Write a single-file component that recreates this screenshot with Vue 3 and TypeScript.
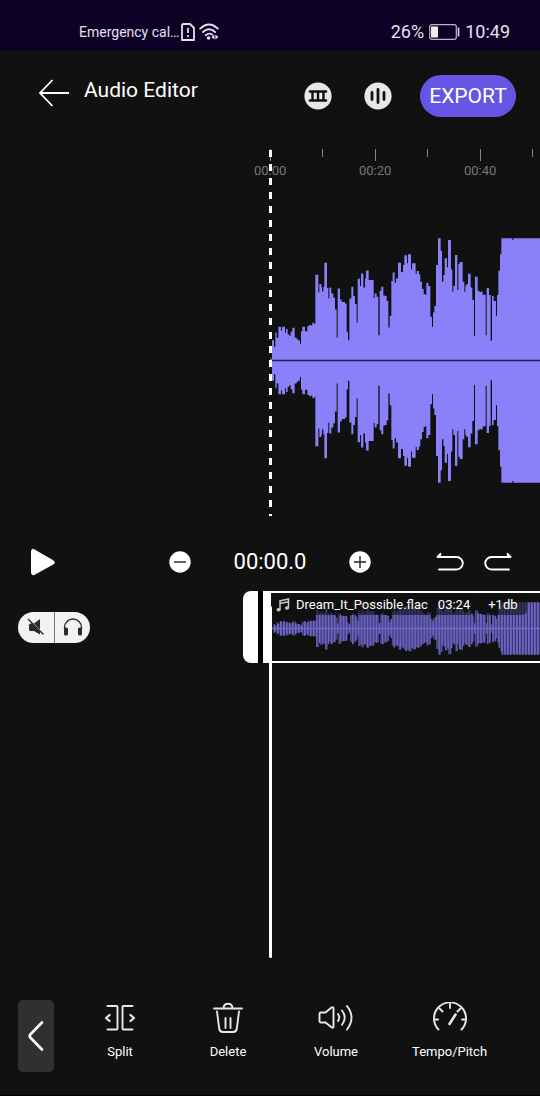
<script setup lang="ts">
import { computed, ref } from 'vue'

interface Tool {
  id: 'split' | 'delete' | 'volume' | 'tempo'
  label: string
}

const tools: Tool[] = [
  { id: 'split', label: 'Split' },
  { id: 'delete', label: 'Delete' },
  { id: 'volume', label: 'Volume' },
  { id: 'tempo', label: 'Tempo/Pitch' },
]

const marks: string[] = ['00:00', '00:20', '00:40']

const playing = ref(false)
const timecode = ref('00:00.0')

// Peak envelope as [start, level] steps; 810 units wide, levels up to 366.
const peaks: [number, number][] = [
  [0, 6], [6, 61], [12, 41], [16, 83], [20, 68], [25, 101], [33, 89], [36, 101], [45, 83], [48, 94],
  [53, 79], [58, 74], [62, 86], [67, 98], [74, 69], [80, 64], [85, 60], [90, 49], [93, 88], [97, 101],
  [105, 88], [112, 103], [118, 107], [123, 105], [127, 113], [133, 109], [136, 257], [145, 204],
  [148, 229], [154, 221], [156, 207], [160, 221], [163, 293], [171, 217], [175, 186], [178, 219],
  [184, 201], [190, 188], [195, 153], [200, 69], [203, 216], [210, 183], [215, 175], [225, 171],
  [230, 86], [234, 61], [238, 186], [244, 221], [250, 193], [255, 169], [260, 113], [263, 245],
  [270, 223], [273, 261], [280, 219], [285, 246], [288, 270], [296, 241], [311, 187], [314, 201],
  [320, 191], [325, 76], [329, 209], [334, 221], [340, 195], [345, 193], [350, 179], [355, 99],
  [359, 134], [364, 238], [368, 264], [374, 233], [378, 246], [384, 293], [390, 293], [393, 265],
  [399, 286], [403, 315], [411, 291], [414, 318], [423, 273], [426, 291], [437, 259], [440, 268],
  [447, 258], [451, 236], [456, 214], [461, 199], [466, 196], [469, 233], [475, 223], [481, 131],
  [486, 101], [489, 144], [493, 163], [498, 286], [504, 366], [512, 329], [516, 236], [520, 256],
  [524, 306], [531, 279], [534, 361], [543, 273], [547, 206], [550, 223], [555, 316], [562, 211],
  [565, 288], [569, 295], [578, 236], [583, 206], [586, 223], [589, 229], [594, 260], [602, 219],
  [607, 181], [612, 73], [615, 251], [623, 209], [628, 205], [633, 207], [638, 197], [647, 76],
  [650, 217], [657, 196], [662, 59], [666, 193], [671, 178], [678, 134], [681, 196], [685, 269],
  [690, 318], [694, 366], [727, 361], [730, 366], [810, 366],
]

const wavePath = computed(() => {
  const top: string[] = []
  const bottom: string[] = []
  peaks.forEach(([x, level], i) => {
    const next = i + 1 < peaks.length ? peaks[i + 1][0] : x
    top.push(`L${x} ${370 - level}L${next} ${370 - level}`)
    bottom.unshift(`L${next} ${370 + level}L${x} ${370 + level}`)
  })
  return `M0 370${top.join('')}${bottom.join('')}Z`
})
</script>

<template>
  <main class="page">
    <div class="status">
      <span class="carrier">Emergency cal…</span>
      <svg class="sim" viewBox="0 0 14 18" width="14" height="18" aria-hidden="true">
        <path d="M2 1h7l4 4v12H1V2z" fill="none" stroke="#e4e0ee" stroke-width="1.8" stroke-linejoin="round" />
        <path d="M7 5v5M7 12v2" stroke="#e4e0ee" stroke-width="1.8" />
      </svg>
      <svg class="wifi" viewBox="0 0 20 18" width="20" height="18" aria-hidden="true">
        <g fill="none" stroke="#e4e0ee" stroke-width="1.9" stroke-linecap="round">
          <path d="M1.2 5.6Q10-2.6 18.8 5.6" />
          <path d="M4 9Q10 3.4 16 9" />
          <path d="M6.8 12.2Q10 9.4 13 11.6" />
        </g>
        <circle cx="9.6" cy="15" r="1.8" fill="#e4e0ee" />
        <path d="M15.4 11.5v5L12.4 14zM16.4 11.5v5l3-2.5z" fill="#e4e0ee" />
      </svg>
      <span class="battery-text">26%</span>
      <svg viewBox="0 0 31 16" width="31" height="16" aria-hidden="true">
        <rect x="0.7" y="0.7" width="26.6" height="14.6" rx="2" fill="none" stroke="#b9b4c8" stroke-width="1.2" />
        <rect x="2" y="2.5" width="7" height="11" fill="#eeebf5" />
        <rect x="28.6" y="3.5" width="1.8" height="9" fill="#c9c5d6" />
      </svg>
      <span>10:49</span>
    </div>

    <header class="appbar">
      <button class="back" aria-label="Back">
        <svg viewBox="0 0 30 28" width="30" height="28">
          <path d="M13.5 1L1 14l12.500 13M1 14h29" fill="none" stroke="#fff" stroke-width="1.8" />
        </svg>
      </button>
      <h1>Audio Editor</h1>
      <button class="round" aria-label="Tracks">
        <svg viewBox="0 0 28 28" width="28" height="28">
          <circle cx="14" cy="14" r="13.6" fill="#e8e8e8" />
          <path d="M6 9.500h16M6 18.500h16" stroke="#111" stroke-width="2.700" stroke-linecap="round" />
          <path d="M8.500 9v10M14 9v10M19.500 9v10" stroke="#111" stroke-width="2.400" />
        </svg>
      </button>
      <button class="round" aria-label="Waveform">
        <svg viewBox="0 0 28 28" width="28" height="28">
          <circle cx="14" cy="14" r="13.6" fill="#e8e8e8" />
          <path d="M8 10.500v7M14 7.500v13M20 10.500v7" stroke="#111" stroke-width="2.800" stroke-linecap="round" />
        </svg>
      </button>
      <button class="export">EXPORT</button>
    </header>

    <section class="stage" aria-label="Waveform">
      <div class="ruler">
        <div v-for="mark in marks" :key="mark" class="segment">
          <i class="tick major"></i>
          <i class="tick"></i>
          <span>{{ mark }}</span>
        </div>
      </div>
      <svg class="wave" viewBox="0 0 810 740" preserveAspectRatio="none" aria-hidden="true">
        <path :d="wavePath" fill="#8a80f9" />
        <path d="M0 370H810" stroke="#292255" stroke-width="4" />
      </svg>
      <i class="cursor"></i>
    </section>

    <section class="controls" aria-label="Playback">
      <button aria-label="Play" class="play" @click="playing = !playing">
        <svg viewBox="0 0 26 28" width="26" height="28">
          <path d="M3.500 2.500L22.500 13.500Q24 14.200 22.500 15.200L4 25.500Q2.500 26 2.500 24.500V3.500Q2.500 2 3.500 2.500z" fill="#fff" stroke="#fff" stroke-width="3" stroke-linejoin="round" />
        </svg>
      </button>
      <div class="zoom">
        <button aria-label="Zoom out">
          <svg viewBox="0 0 22 22" width="22" height="22">
            <circle cx="11" cy="11" r="10.700" fill="#fff" />
            <path d="M5 11h12" stroke="#222" stroke-width="1.400" />
          </svg>
        </button>
        <output>{{ timecode }}</output>
        <button aria-label="Zoom in">
          <svg viewBox="0 0 22 22" width="22" height="22">
            <circle cx="11" cy="11" r="10.700" fill="#fff" />
            <path d="M5 11h12M11 5v12" stroke="#222" stroke-width="1.400" />
          </svg>
        </button>
      </div>
      <div class="history">
        <button aria-label="Undo">
          <svg viewBox="0 0 28 20" width="28" height="20">
            <path d="M4.500 2L1.500 5H20.500a6.200 6.200 0 0 1 0 12.500H3" fill="none" stroke="#fff" stroke-width="1.900" stroke-linejoin="round" stroke-linecap="round" />
            <path d="M5 0.500V5H1z" fill="#fff" />
          </svg>
        </button>
        <button aria-label="Redo">
          <svg viewBox="0 0 28 20" width="28" height="20">
            <path d="M23.500 2L26.500 5H7.500a6.200 6.200 0 0 0 0 12.500H25" fill="none" stroke="#fff" stroke-width="1.900" stroke-linejoin="round" stroke-linecap="round" />
            <path d="M23 0.500V5h4z" fill="#fff" />
          </svg>
        </button>
      </div>
    </section>

    <section class="timeline" aria-label="Tracks">
      <div class="lane">
        <div class="lane-head">
          <div class="pill">
            <button aria-label="Mute">
              <svg viewBox="0 0 18 18" width="18" height="18">
                <path d="M3.500 5.500H7L13 1v15.500L7 13H3.500Q2 13 2 11.500V7Q2 5.500 3.500 5.500z" fill="#2b2b2b" />
                <path d="M2 1.500L17.500 17" stroke="#f2f2f2" stroke-width="1.200" />
                <path d="M1 1L16.500 16.500" stroke="#2b2b2b" stroke-width="1.400" />
              </svg>
            </button>
            <button aria-label="Solo">
              <svg viewBox="0 0 20 18" width="20" height="18">
                <path d="M1.500 11V9.500a8.500 8.500 0 0 1 17 0V11" fill="none" stroke="#2b2b2b" stroke-width="1.300" />
                <rect x="1" y="9.500" width="4" height="8" rx="1.500" fill="#2b2b2b" />
                <rect x="15" y="9.500" width="4" height="8" rx="1.500" fill="#2b2b2b" />
              </svg>
            </button>
          </div>
          <button class="handle" aria-label="Trim start"></button>
        </div>
        <div class="clip">
          <svg class="mini" viewBox="0 0 810 740" preserveAspectRatio="none" aria-hidden="true">
            <defs>
              <pattern id="bars" width="9" height="740" patternUnits="userSpaceOnUse">
                <rect width="9" height="740" fill="#38336f" />
                <rect width="5" height="740" fill="#736acb" />
              </pattern>
            </defs>
            <path :d="wavePath" fill="url(#bars)" />
            <path d="M0 370H810" stroke="#7068c8" stroke-width="24" />
          </svg>
          <div class="tags">
            <span class="tag name">
              <svg viewBox="0 0 14 14" width="14" height="14" aria-hidden="true">
                <path d="M4 11.500V2.800L12.500 1v8.500M4 5.500l8.500-1.800" fill="none" stroke="#c9c9c9" stroke-width="1.500" />
                <ellipse cx="2.600" cy="11.800" rx="2.100" ry="1.700" fill="#c9c9c9" />
                <ellipse cx="11" cy="10" rx="2.100" ry="1.700" fill="#c9c9c9" />
              </svg>
              <span>Dream_It_Possible.flac</span>
              <span class="length">03:24</span>
            </span>
            <span class="tag">+1db</span>
          </div>
        </div>
      </div>
      <i class="playhead"></i>
    </section>

    <nav class="toolbar" aria-label="Tools">
      <button class="collapse" aria-label="Previous menu">
        <svg viewBox="0 0 16 30" width="16" height="30">
          <path d="M14 1.500L2.300 13.500Q1 15 2.300 16.500L14 28.500" fill="none" stroke="#fff" stroke-width="2.600" stroke-linecap="round" />
        </svg>
      </button>
      <button v-for="tool in tools" :key="tool.id" class="tool">
        <svg viewBox="0 0 36 32" width="36" height="32" fill="none" stroke="#e8e8e8" stroke-width="1.900" stroke-linecap="round" stroke-linejoin="round">
          <template v-if="tool.id === 'split'">
            <path d="M5.500 4H14.500Q15.500 4 15.500 5V26.500Q15.500 27.500 14.500 27.500H5.500" />
            <path d="M30.500 4H21.500Q20.500 4 20.500 5V26.500Q20.500 27.500 21.500 27.500H30.500" />
            <path d="M7.500 13L4 16l3.500 3M28.500 13L32 16l-3.500 3" stroke-width="2.300" />
          </template>
          <template v-else-if="tool.id === 'delete'">
            <path d="M4 6.500H32M13.500 6Q14 1.800 18 1.800T22.500 6" />
            <path d="M7 9.500L9.200 26.500Q9.800 30 12.500 30H23.500Q26.200 30 26.800 26.500L29 9.500" />
            <path d="M15.500 16v10M20.500 16v10" />
          </template>
          <template v-else-if="tool.id === 'volume'">
            <path d="M1.500 12Q1.500 10.500 3 10.500H7.500L13.500 5.500Q15.500 4.500 15.500 6.500V24.500Q15.500 26.500 13.500 25.200L7.500 20.500H3Q1.500 20.500 1.500 19z" />
            <path d="M20 12Q22.500 15.500 20 19M24 8.500Q29.500 15.500 24 22.800M29 4Q38 15.500 29 27.500" />
          </template>
          <template v-else>
            <path d="M6.500 27.500A16 16 0 1 1 29.500 27.500" />
            <path d="M18 2v4M7.500 6.500l3 3M28.500 6.500l-3 3M2.500 17.500h3.500M33.500 17.500H30" />
            <path d="M17.500 22L23.500 12.500" stroke-width="2.600" />
          </template>
        </svg>
        <span>{{ tool.label }}</span>
      </button>
    </nav>
  </main>
</template>

<style>
body {
  margin: 0;
  background: #111;
}
</style>

<style scoped>
.page {
  display: flex;
  flex-direction: column;
  box-sizing: border-box;
  min-height: 100vh;
  overflow: hidden;
  border-bottom: 1px solid #000;
  background: #111;
  color: #fff;
  font-family: Roboto, sans-serif;
}

button {
  display: flex;
  align-items: center;
  justify-content: center;
  margin: 0;
  padding: 0;
  border: 0;
  background: none;
  color: inherit;
  font: inherit;
  cursor: pointer;
}

svg {
  display: block;
  flex: none;
}

.status {
  display: flex;
  align-items: center;
  box-sizing: border-box;
  height: 51px;
  padding: 12px 30px 0 79px;
  background: #0d0226;
  color: #e4e0ee;
  font-size: 18px;
}

.carrier {
  margin-right: 2px;
  font-size: 14px;
}

.wifi {
  margin-left: 4px;
}

.battery-text {
  margin-left: auto;
}

.battery-text + svg {
  margin: 0 5px;
}

.appbar {
  display: flex;
  align-items: center;
  height: 90px;
  padding: 0 24px 0 39px;
}

.back {
  margin-top: -6px;
}

h1 {
  margin: -12px auto 0 15px;
  font-size: 21px;
  font-weight: 400;
}

.round {
  margin-right: 32px;
}

.round + .round {
  margin-right: 28px;
}

.export {
  width: 96px;
  height: 42px;
  border-radius: 21px;
  background: #6655e4;
  font-size: 21px;
}

.stage {
  position: relative;
  padding: 8px 0 31px 50%;
}

.ruler {
  display: flex;
  height: 88px;
}

.segment {
  display: grid;
  grid-template-columns: 52px 53px;
  grid-template-rows: 12px 20px;
  flex: none;
}

.tick {
  width: 1px;
  height: 8px;
  background: #858585;
}

.major {
  height: 12px;
}

.segment span {
  width: 34px;
  margin-left: -16px;
  color: #777;
  font-size: 13px;
  line-height: 20px;
}

.wave {
  width: 100%;
  height: 247px;
}

.cursor {
  position: absolute;
  top: 9px;
  bottom: -1px;
  left: calc(50% - 1px);
  width: 3px;
  background: repeating-linear-gradient(#fff 0 7px, transparent 7px 14px);
}

.controls {
  display: grid;
  grid-template-columns: 1fr 202px 1fr;
  align-items: center;
  box-sizing: border-box;
  height: 76px;
  padding: 17px 28px 0;
}

.play {
  justify-self: start;
  margin-left: 2px;
}

.zoom,
.history {
  display: flex;
  align-items: center;
  justify-content: space-between;
}

.history {
  justify-self: end;
  gap: 20px;
}

output {
  font-size: 22px;
}

.timeline {
  position: relative;
  flex: 1;
}

.lane {
  display: grid;
  grid-template-columns: 1fr 1fr;
  height: 72px;
}

.lane-head {
  display: flex;
  align-items: center;
  justify-content: space-between;
  padding: 0 12px 0 18px;
}

.pill {
  display: flex;
  overflow: hidden;
  border-radius: 16px;
  background: #f2f2f2;
}

.pill button {
  width: 36px;
  height: 31px;
}

.pill button + button {
  border-left: 1px solid #777;
}

.handle {
  width: 15px;
  height: 72px;
  border-radius: 8px 0 0 8px;
  background: #fff;
}

.clip {
  position: relative;
  box-sizing: border-box;
  margin-left: -7px;
  overflow: hidden;
  border: solid #fff;
  border-width: 2px 0 2px 8px;
  background: #111;
  box-shadow: -5px 0 #000;
}

.mini {
  width: 100%;
  height: 53px;
  margin-top: 9px;
}

.tags {
  position: absolute;
  top: 2px;
  left: 1px;
  display: flex;
  gap: 5px;
  font-size: 13px;
  line-height: 20px;
}

.tag {
  padding: 0 9px;
  border-radius: 5px;
  background: rgba(17, 17, 17, 0.6);
}

.name {
  display: flex;
  align-items: center;
  gap: 6px;
  padding: 0 4px;
}

.length {
  margin-left: 4px;
}

.playhead {
  position: absolute;
  top: 15px;
  bottom: 0;
  left: calc(50% - 1px);
  width: 3px;
  border-radius: 2px;
  background: #fff;
}

.toolbar {
  display: flex;
  align-items: flex-start;
  padding: 42px 18px 23px;
}

.collapse {
  width: 36px;
  height: 72px;
  margin-right: 12px;
  border-radius: 5px;
  background: #303030;
}

.tool {
  flex-direction: column;
  gap: 8px;
  min-width: 108px;
  padding: 2px 22px 0;
  font-size: 13px;
  line-height: 20px;
}
</style>
